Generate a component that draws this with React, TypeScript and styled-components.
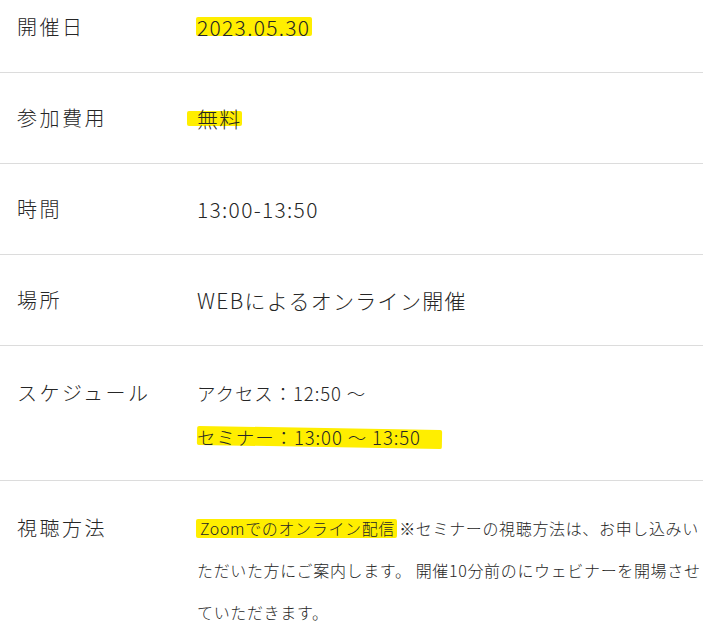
import React from 'react'
import styled, { createGlobalStyle } from 'styled-components'

const GlobalStyle = createGlobalStyle`
  html, body {
    margin: 0;
    padding: 0;
    background: #ffffff;
    overflow: hidden;
  }
  body {
    font-family: 'Noto Sans CJK JP', 'Noto Sans', sans-serif;
    font-weight: 300;
    color: #262626;
  }
`

const Table = styled('div')`
  width: 703px;
  margin-top: -18px;
`

const Row = styled('div')<{ $lh: number; $pt: number; $pb: number }>`
  display: grid;
  grid-template-columns: 180px 1fr;
  padding: ${({ $pt }) => $pt}px 0 ${({ $pb }) => $pb}px 17px;
  border-bottom: 1px solid #dcdcdc;
  line-height: ${({ $lh }) => $lh}px;

  &:last-child {
    border-bottom: none;
  }
`

const Label = styled('div')`
  font-size: 20px;
  letter-spacing: 2.5px;
  white-space: nowrap;
`

const Value = styled('div')<{ $size: number; $ls?: number }>`
  font-size: ${({ $size }) => $size}px;
  letter-spacing: ${({ $ls }) => $ls ?? 1.3}px;
`

// hand-drawn yellow marker behind a phrase
const Marker = styled('span')<{ $l: number; $r: number; $t: number; $b: number; $tilt?: number; $pad?: number }>`
  position: relative;
  z-index: 0;
  padding-left: ${({ $pad }) => $pad ?? 0}px;

  &::before {
    content: '';
    position: absolute;
    z-index: -1;
    left: ${({ $l }) => $l}px;
    right: ${({ $r }) => $r}px;
    top: ${({ $t }) => $t}px;
    bottom: ${({ $b }) => $b}px;
    background: #ffee00;
    border-radius: 2px;
    transform: rotate(${({ $tilt }) => $tilt ?? 0}deg);
  }
`

export default function App() {
  return (
    <>
      <GlobalStyle />
      <Table>
        <Row $lh={30} $pt={30} $pb={30}>
          <Label>開催日</Label>
          <Value $size={21}>
            <Marker $l={-1} $r={-2} $t={5} $b={6}>
              2023.05.30
            </Marker>
          </Value>
        </Row>
        <Row $lh={30} $pt={30} $pb={30}>
          <Label>参加費用</Label>
          <Value $size={21}>
            <Marker $l={-10} $r={0} $t={8} $b={7}>
              無料
            </Marker>
          </Value>
        </Row>
        <Row $lh={30} $pt={30} $pb={30}>
          <Label>時間</Label>
          <Value $size={21}>13:00-13:50</Value>
        </Row>
        <Row $lh={30} $pt={30} $pb={30}>
          <Label>場所</Label>
          <Value $size={21}>WEBによるオンライン開催</Value>
        </Row>
        <Row $lh={44} $pt={25} $pb={21}>
          <Label>スケジュール</Label>
          <Value $size={18.5} $ls={0.9}>
            アクセス：12:50 〜
            <br />
            <Marker $l={0} $r={-21} $t={4} $b={3} $tilt={1}>
              セミナー：13:00 〜 13:50
            </Marker>
          </Value>
        </Row>
        <Row $lh={42} $pt={26} $pb={20}>
          <Label>視聴方法</Label>
          <Value $size={16} $ls={0.65}>
            <Marker $l={-1} $r={-2} $t={3} $b={2} $pad={3}>
              Zoomでのオンライン配信
            </Marker>{' '}
            ※セミナーの視聴方法は、お申し込みいただいた方にご案内します。 開催10分前のにウェビナーを開場させていただきます。
          </Value>
        </Row>
      </Table>
    </>
  )
}
